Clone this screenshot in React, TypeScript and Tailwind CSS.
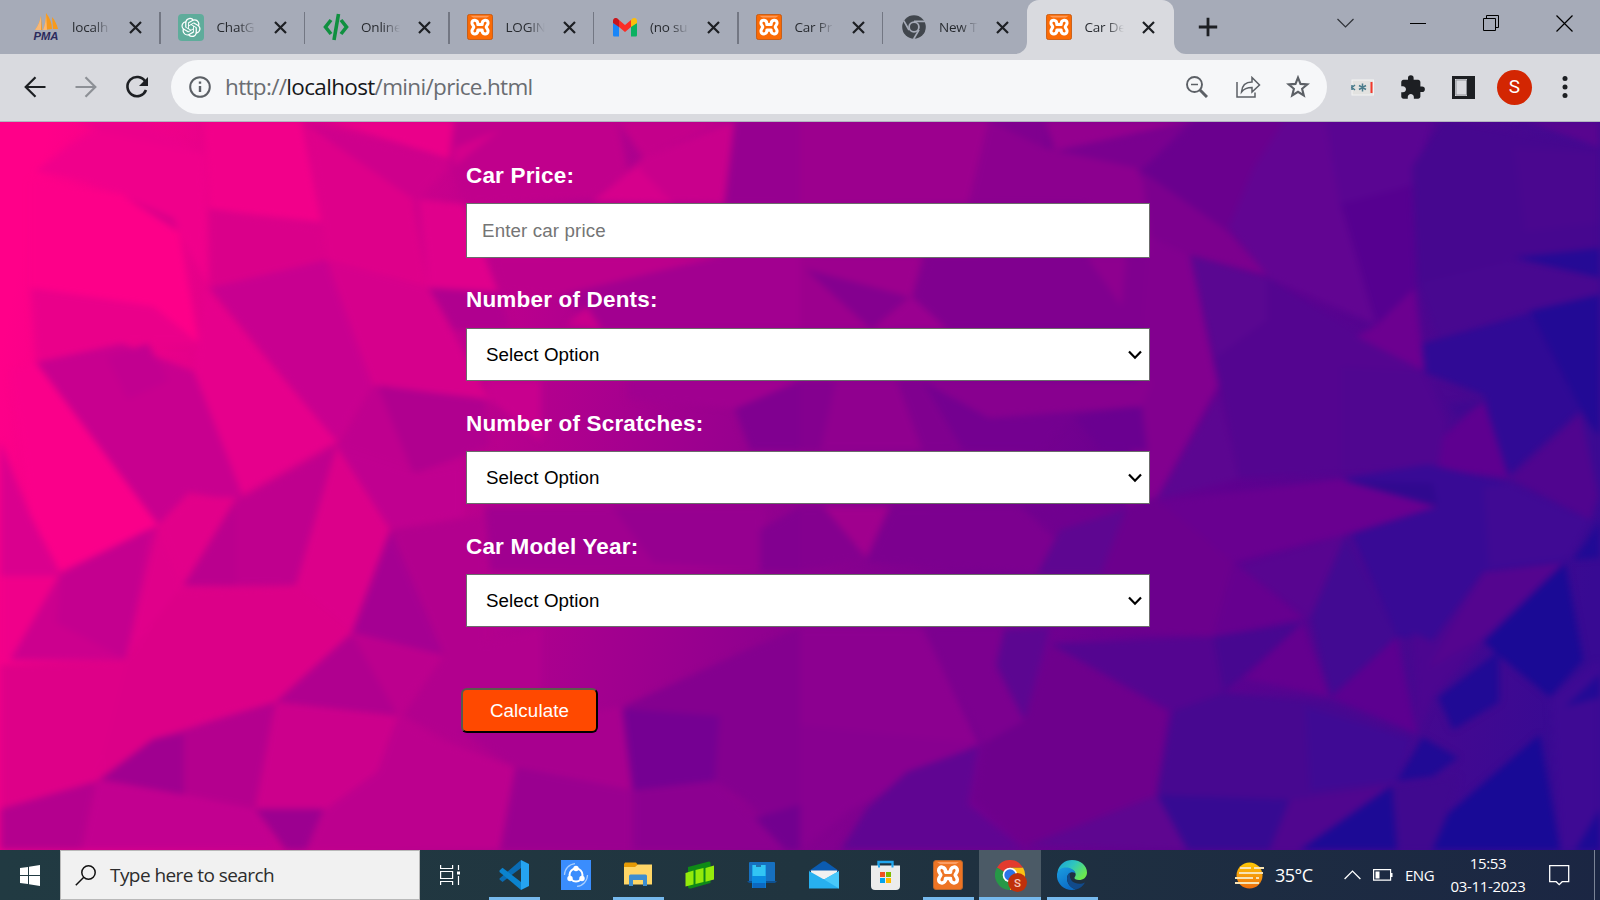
import type { ReactNode } from "react";

type Facet = [string, string];

const LEFT_FACETS: Facet[] = [
  ["70,110 140,50 200,10 400,70 410,360 350,240 240,160 160,130", "#f0008b"],
  ["60,130 240,160 350,240 390,480 300,400 60,360", "#fd0089"],
  ["245,165 350,240 340,210", "#d8008a"],
  ["150,0 280,0 400,75 200,25", "#ec008b"],
  ["400,0 590,0 630,220 410,190", "#f2008a"],
  ["590,0 890,90 810,180", "#ce008c"],
  ["600,10 810,170 840,360 640,300 630,220", "#de008a"],
  ["640,0 890,0 885,85", "#ea008a"],
  ["410,190 630,230 640,300 410,360", "#da008a"],
  ["410,360 640,300 730,570 660,690", "#c80090"],
  ["640,300 840,360 960,600 730,570", "#d6008c"],
  ["820,170 910,180 980,380 840,360", "#e0008c"],
  ["400,360 660,690 460,810 410,630 380,540", "#e6008c"],
  ["60,360 300,400 390,480 240,480 70,520", "#ea008a"],
  ["70,520 240,480 380,540 480,820 370,800 310,870", "#c8008f"],
  ["210,510 290,480 330,560 250,600", "#c20090"],
  ["20,540 70,520 310,870 120,970 60,850", "#fa008a"],
  ["0,690 60,850 120,980 0,980", "#da008e"],
  ["0,980 120,980 20,1160 0,1160", "#f0008a"],
  ["310,870 370,810 460,810 360,1000", "#e2008a"],
  ["460,820 660,700 580,1000 360,1000", "#bf008e"],
  ["460,820 460,1000 360,1000", "#ba008e"],
  ["660,700 765,880 690,1100 580,1000", "#dc008a"],
  ["730,570 960,600 910,740 820,760 660,700", "#bf008f"],
  ["740,570 950,600 960,700 810,760", "#b0008f"],
  ["660,700 820,760 910,740 910,850 765,880", "#c00090"],
  ["765,880 950,850 950,1150 870,1150", "#b2008e"],
  ["765,880 870,1150 690,1100", "#a50092"],
  ["120,970 310,870 245,1160 20,1160", "#cc008e"],
  ["290,880 250,1160 110,1080 120,980", "#c4008f"],
  ["310,870 360,1000 245,1160", "#e0008a"],
  ["245,1160 350,1010 580,1000 690,1100 540,1250 400,1290 190,1420", "#dc0088"],
  ["0,1170 250,1160 190,1420 0,1480", "#de0088"],
  ["690,1100 870,1150 780,1280 540,1250", "#bc008e"],
  ["690,1105 780,1280 540,1250", "#b0008f"],
  ["540,1250 780,1280 740,1400 640,1480 500,1480", "#cc008c"],
  ["190,1420 300,1330 540,1250 500,1480 360,1450", "#b4008e"],
  ["200,1415 300,1330 360,1320 360,1450", "#a00090"],
  ["0,1480 190,1420 160,1568 0,1568", "#b4008e"],
  ["190,1420 360,1450 500,1480 550,1568 160,1568", "#c20090"],
  ["500,1480 635,1480 600,1568 560,1568", "#9c0090"],
  ["780,1280 860,1330 1010,1390 980,1568 600,1568 640,1480 740,1400", "#bc008e"],
  ["870,1150 1060,1090 1060,1220 900,1340 790,1280", "#b2008e"],
  ["900,1310 1220,1260 1240,1440 1010,1390", "#a8008f"],
  ["1010,1390 1240,1440 1240,1568 980,1568", "#9a0090"],
  ["1220,1260 1460,1140 1568,1090 1568,1568 1460,1460 1400,1420", "#84008f"],
  ["1220,1265 1410,1280 1400,1420 1240,1440", "#750092"],
  ["1480,1500 1568,1470 1568,1568 1540,1568", "#72008f"],
  ["1240,1440 1400,1420 1540,1568 1240,1568", "#8c0090"],
  ["890,0 1210,0 1230,110 1160,170 910,180 880,90", "#c0008c"],
  ["890,60 980,20 890,100", "#d4008c"],
  ["1210,0 1430,0 1260,80", "#c4008b"],
  ["1160,175 1260,80 1440,0 1420,180", "#c9008c"],
  ["1250,100 1160,175 1320,180", "#d6008c"],
  ["1440,0 1568,0 1568,180 1420,180", "#960090"],
  ["960,290 1420,290 1100,380 980,370", "#bc008c"],
  ["1100,375 1420,290 1568,290 1568,450 1170,450", "#a20090"],
  ["840,360 980,370 1000,450 890,450", "#b0008f"],
  ["1110,440 1150,400 1180,450", "#c8008c"],
  ["950,560 1060,560 1060,690 960,600", "#c8008e"],
  ["1230,560 1568,560 1450,620 1230,600", "#a00090"],
  ["1440,620 1568,560 1568,710 1470,710", "#800090"],
  ["950,830 1490,830 1490,970 960,970", "#a00090"],
  ["1200,830 1500,830 1490,970 1280,950", "#960090"],
  ["1490,880 1568,830 1568,970 1490,970", "#820090"],
];

const RIGHT_FACETS: Facet[] = [
  ["0,0 370,0 330,180 0,180", "#9c008e"],
  ["330,180 370,0 480,60 660,100 720,250 685,300 560,180", "#8c008f"],
  ["370,0 480,0 480,60", "#80008f"],
  ["480,0 780,0 500,65", "#94008f"],
  ["500,65 760,10 670,105", "#7a008f"],
  ["670,110 780,0 950,0 840,240 720,190", "#6a008e"],
  ["670,110 840,240 920,335 765,290 685,250", "#7c008e"],
  ["950,0 1030,0 1060,180 1130,440 920,340 840,230 890,100", "#620592"],
  ["1030,0 1240,0 1200,140 1060,190", "#5a0592"],
  ["1060,180 1200,140 1210,360 1130,440", "#560090"],
  ["1200,100 1260,0 1568,60 1568,280 1400,300 1210,360", "#46078f"],
  ["1420,0 1568,0 1568,60", "#58058f"],
  ["1400,60 1568,70 1568,220 1420,240", "#4a078f"],
  ["1210,350 1400,300 1568,340 1568,375 1430,410 1250,470", "#480890"],
  ["1400,295 1568,275 1568,338", "#250a95"],
  ["1220,480 1430,415 1530,620 1380,770 1340,590 1220,540", "#300a95"],
  ["1430,410 1568,375 1568,690 1530,620", "#220a95"],
  ["0,290 240,290 220,380 150,450 0,450", "#9c008e"],
  ["10,320 215,380 140,450", "#84008f"],
  ["220,380 290,450 150,450", "#9a0090"],
  ["250,290 690,290 690,450 290,450 220,380", "#80008f"],
  ["560,290 640,290 630,400", "#8e008f"],
  ["685,250 765,290 820,570 700,810 640,830", "#82008f"],
  ["765,290 920,340 1100,460 1220,540 1270,650 1250,745 860,770 820,560", "#540590"],
  ["765,290 915,340 915,430 815,510", "#5a0791"],
  ["1060,530 1220,540 1270,650 1250,745 1060,760", "#500690"],
  ["1130,440 1205,360 1225,540 1090,465", "#6c0090"],
  ["820,590 860,770 700,815", "#5c0691"],
  ["1260,680 1340,600 1390,770 1250,750", "#5e0090"],
  ["1270,610 1350,600 1290,640", "#400890"],
  ["1390,770 1530,630 1568,800 1550,860", "#50058f"],
  ["1530,630 1568,680 1568,820", "#3c0a92"],
  ["0,560 190,560 240,710 0,710", "#90008f"],
  ["0,560 70,560 40,710 0,710", "#84008f"],
  ["190,560 240,560 320,710 240,710", "#80008f"],
  ["240,560 370,640 540,630 470,710 320,710", "#740090"],
  ["240,560 690,560 670,615 370,640", "#88008f"],
  ["540,640 670,615 680,710 590,710", "#6a0090"],
  ["700,820 1060,770 1250,830 1070,890 850,950", "#690090"],
  ["1060,770 1230,740 1390,780 1550,860 1500,950 1340,970 1240,1120 1170,1110 1080,890 1250,830", "#380a95"],
  ["1340,790 1390,780 1550,860 1510,940 1350,960", "#400a94"],
  ["1070,775 1240,780 1250,830", "#30098f"],
  ["860,960 1070,890 1000,1070", "#580590"],
  ["1070,890 1170,1110 1040,1240 1000,1070", "#420a92"],
  ["640,835 700,815 850,950 810,1110 590,1100 590,975", "#6c008d"],
  ["850,950 990,1070 810,1110", "#66008f"],
  ["0,830 50,830 130,940 0,970", "#84008f"],
  ["45,830 175,830 130,940", "#a0008e"],
  ["180,830 430,830 500,900 465,975 130,950", "#7c008f"],
  ["430,830 640,835 510,880", "#70008f"],
  ["510,880 640,835 590,975 465,975", "#5e0691"],
  ["0,1090 240,1090 350,1340 100,1470 0,1568", "#8c0090"],
  ["0,1300 350,1340 100,1480 0,1568", "#880090"],
  ["240,1090 400,1090 385,1180 440,1290 360,1340", "#7c008f"],
  ["400,1095 490,1090 440,1290 385,1170", "#5c0691"],
  ["490,1130 720,1270 700,1450 440,1560 340,1460 360,1340 440,1290", "#6e008c"],
  ["350,1345 330,1470 440,1568 80,1568 130,1480 210,1400", "#600592"],
  ["440,1560 700,1450 760,1568", "#5e0690"],
  ["490,1125 810,1110 830,1230 730,1270", "#540590"],
  ["810,1110 985,1080 830,1230", "#470790"],
  ["985,1080 1040,1240 870,1200", "#64008f"],
  ["730,1270 830,1230 1040,1250 1200,1330 1170,1420 1000,1568 760,1568 700,1440", "#470890"],
  ["990,1260 1200,1330 1170,1420 1000,1440", "#3f0a94"],
  ["700,1450 960,1460 920,1568 760,1568", "#360a92"],
  ["960,1460 1160,1430 980,1568 920,1568", "#50068f"],
  ["1040,1240 1170,1110 1210,1320", "#5c0090"],
  ["1200,1100 1240,1120 1340,970 1500,950 1340,1120 1240,1240 1210,1320", "#4c0690"],
  ["1340,970 1500,950 1340,1110 1230,1180", "#54058f"],
  ["1250,1240 1370,1140 1370,1250 1280,1310", "#200a95"],
  ["1340,1120 1500,950 1535,1160 1470,1240 1370,1150", "#1a0a95"],
  ["1170,1420 1220,1325 1290,1370 1240,1410", "#200a95"],
  ["1160,1430 1290,1410 1270,1490 1300,1568 1170,1568", "#40098f"],
  ["980,1568 1160,1430 1170,1568", "#1c0a95"],
  ["1270,1490 1450,1320 1490,1568 1240,1568", "#180a96"],
  ["1470,1240 1568,1160 1568,1568 1490,1568", "#3e0a94"],
  ["1500,1260 1568,1190 1568,1240", "#220a95"],
  ["1520,1568 1568,1480 1568,1568", "#1c0a95"],
  ["1545,900 1568,860 1568,940 1515,945", "#200a95"],
];

function Backdrop() {
  return (
    <svg className="absolute inset-0 h-full w-full" viewBox="0 4 3136 1564" preserveAspectRatio="none" aria-hidden="true">
      <defs>
        <linearGradient id="sweep" gradientUnits="userSpaceOnUse" x1="0" y1="500" x2="3100" y2="1100">
          <stop offset="0" stopColor="#ff0089" />
          <stop offset="0.13" stopColor="#e2008a" />
          <stop offset="0.27" stopColor="#c2008d" />
          <stop offset="0.4" stopColor="#a4008f" />
          <stop offset="0.55" stopColor="#86008f" />
          <stop offset="0.75" stopColor="#620090" />
          <stop offset="0.9" stopColor="#470890" />
          <stop offset="1" stopColor="#380a93" />
        </linearGradient>
        <filter id="soften" x="-2%" y="-2%" width="104%" height="104%" colorInterpolationFilters="sRGB">
          <feGaussianBlur stdDeviation="7" />
        </filter>
      </defs>
      <rect y="0" width="3136" height="1568" fill="url(#sweep)" />
      <g filter="url(#soften)">
        {LEFT_FACETS.map(([points, fill], i) => (
          <polygon key={i} points={points} fill={fill} />
        ))}
        <g transform="translate(1568 0)">
          {RIGHT_FACETS.map(([points, fill], i) => (
            <polygon key={i} points={points} fill={fill} />
          ))}
        </g>
      </g>
    </svg>
  );
}

function Xampp({ size, muted = false }: { size: number; muted?: boolean }) {
  return (
    <svg width={size} height={size} viewBox="0 0 30 30">
      <rect x="0.5" y="0.5" width="29" height="29" rx="2.5" fill={muted ? "#ee7424" : "#fb6a04"} stroke={muted ? "#b8662c" : "#c4560c"} />
      <path d="M4 2h22l-3 2H7z" fill="#ffa870" opacity="0.8" />
      <path
        d="M12.500 12.200h5C17 6 24.500 5.500 24.300 10.500c-.2 2.200-1.600 2.800-2.100 4.500.5 1.700 1.900 2.300 2.100 4.500C24.500 24.500 17 24 17.500 18.600h-5C13 24 5.500 24.500 5.700 19.500c.2-2.200 1.600-2.800 2.100-4.500-.5-1.700-1.900-2.300-2.100-4.500C5.500 5.500 13 6 12.500 12.200z"
        fill="none" stroke="#fff" strokeWidth="3.500" strokeLinejoin="round"
      />
    </svg>
  );
}

const Pma = () => (
  <svg width="27" height="28" viewBox="0 0 27 28">
    <path d="M2 17C5 13 7 8 8 3l1 14zM10 17c2-5 3-10 3-17 4 5 6 10 6 16zM20 16l-1-12c3 3 5 8 6 12z" fill="#f79a1c" />
    <path d="M2 17C5 13 7 8 8 3v14zM10 17c2-5 3-10 3-17l1 17z" fill="#f9b876" />
    <text x="0.500" y="26.500" fontFamily="Liberation Sans, sans-serif" fontSize="10" fontWeight="700" fontStyle="italic" fill="#2b2a5c" textLength="25" lengthAdjust="spacingAndGlyphs">PMA</text>
  </svg>
);

const ChatGpt = () => (
  <svg width="26" height="27" viewBox="0 0 26 27">
    <rect width="26" height="27" rx="4" fill="#5fac9b" />
    <g transform="translate(3.400 3.800) scale(0.800)" fill="#fff">
      <path d="M22.282 9.821a5.985 5.985 0 0 0-.516-4.910 6.046 6.046 0 0 0-6.510-2.900A6.065 6.065 0 0 0 4.981 4.182a5.985 5.985 0 0 0-3.998 2.900 6.046 6.046 0 0 0 .743 7.097 5.980 5.980 0 0 0 .510 4.911 6.051 6.051 0 0 0 6.515 2.900A5.985 5.985 0 0 0 13.260 24a6.056 6.056 0 0 0 5.772-4.206 5.990 5.990 0 0 0 3.998-2.900 6.056 6.056 0 0 0-.747-7.073zM13.260 22.430a4.476 4.476 0 0 1-2.876-1.040l.141-.081 4.779-2.758a.795.795 0 0 0 .393-.681v-6.737l2.020 1.168a.071.071 0 0 1 .038.052v5.583a4.504 4.504 0 0 1-4.495 4.494zM3.600 18.304a4.470 4.470 0 0 1-.535-3.014l.142.085 4.783 2.759a.771.771 0 0 0 .780 0l5.843-3.369v2.332a.080.080 0 0 1-.033.062L9.740 19.950a4.500 4.500 0 0 1-6.140-1.646zM2.341 7.896a4.485 4.485 0 0 1 2.366-1.973V11.600a.766.766 0 0 0 .388.676l5.815 3.355-2.020 1.168a.076.076 0 0 1-.071 0l-4.830-2.786A4.504 4.504 0 0 1 2.341 7.872zm16.597 3.855l-5.833-3.387L15.119 7.200a.076.076 0 0 1 .071 0l4.830 2.791a4.494 4.494 0 0 1-.676 8.104v-5.677a.790.790 0 0 0-.407-.667zm2.010-3.023l-.141-.085-4.774-2.782a.776.776 0 0 0-.785 0L9.409 9.230V6.897a.066.066 0 0 1 .028-.061l4.830-2.787a4.500 4.500 0 0 1 6.680 4.660zm-12.640 4.135l-2.020-1.164a.080.080 0 0 1-.038-.057V6.074a4.500 4.500 0 0 1 7.375-3.453l-.142.080L8.704 5.460a.795.795 0 0 0-.393.681zm1.097-2.365l2.602-1.500 2.607 1.500v2.999l-2.597 1.500-2.607-1.500z" />
    </g>
  </svg>
);

const CodeTag = () => (
  <svg width="26" height="28" viewBox="0 0 26 28" fill="none" stroke="#109040" strokeWidth="3.600">
    <path d="M8 7 2.500 14 8 21M18 7l5.500 7-5.500 7M15.500 1l-4.500 26" />
  </svg>
);

const Gmail = () => (
  <svg width="24" height="19" viewBox="0 0 24 19">
    <path d="M0 5v12c0 1 .6 1.500 1.500 1.500H6V8z" fill="#1a86f8" />
    <path d="M24 5v12c0 1-.6 1.500-1.500 1.500H18V8z" fill="#0bb161" />
    <path d="M6 9V2l6 5 6-5v7l-6 5z" fill="#fb2c25" />
    <path d="M0 5V3c0-3 3-4 5-2l1 1v7z" fill="#c9161c" />
    <path d="M24 5V3c0-3-3-4-5-2l-1 1v7z" fill="#fdbd0b" />
  </svg>
);

const ChromeGray = () => (
  <svg width="24" height="24" viewBox="0 0 24 24">
    <circle cx="12" cy="12" r="11.800" fill="#41464d" />
    <circle cx="12" cy="12" r="4.900" fill="none" stroke="#a6abb8" strokeWidth="1.800" />
    <path d="M12 6.300h11M7 15 1.700 5.700M17 14.800l-5.300 9.200" stroke="#a6abb8" strokeWidth="1.700" />
  </svg>
);

const CloseMark = () => (
  <svg width="13" height="13" viewBox="0 0 13 13" className="shrink-0" stroke="#1d1f23" strokeWidth="2.200">
    <path d="M1 1l11 11M12 1 1 12" />
  </svg>
);

function Tab({ icon, title, active = false, sep = true }: { icon: ReactNode; title: string; active?: boolean; sep?: boolean }) {
  return (
    <div className={active ? "relative -ml-px flex h-[54px] w-[147px] shrink-0 items-center rounded-t-[12px] bg-[#d9dadf] pl-[19px]" : "relative flex h-[54px] w-[144.5px] shrink-0 items-center pl-[17px]"}>
      {active && (
        <>
          <svg className="absolute bottom-0 -left-[12px]" width="12" height="12"><path d="M12 0v12H0A12 12 0 0 0 12 0" fill="#d9dadf" /></svg>
          <svg className="absolute -right-[12px] bottom-0" width="12" height="12"><path d="M0 0v12h12A12 12 0 0 1 0 0" fill="#d9dadf" /></svg>
        </>
      )}
      <div className="flex w-[27px] shrink-0 justify-center">{icon}</div>
      <div className="ml-[12px] w-[39px] bg-linear-to-r from-[#25282d] from-55% to-transparent bg-clip-text text-[13.5px] tracking-[-0.2px] whitespace-nowrap text-transparent">{title}</div>
      <div className="ml-[18px] flex">
        <CloseMark />
      </div>
      {sep && <div className="absolute top-[12px] right-0 h-[32px] w-[1.5px] bg-[#737783]" />}
    </div>
  );
}

function TabStrip() {
  return (
    <div className="flex h-[54px] w-full bg-[#a6abb8] pl-[16px]">
      <Tab icon={<Pma />} title="localh" />
      <Tab icon={<ChatGpt />} title="ChatG" />
      <Tab icon={<CodeTag />} title="Online" />
      <Tab icon={<Xampp size={26} />} title="LOGIN" />
      <Tab icon={<Gmail />} title="(no su" />
      <Tab icon={<Xampp size={26} />} title="Car Pr" />
      <Tab icon={<ChromeGray />} title="New T" sep={false} />
      <Tab icon={<Xampp size={26} />} title="Car De" active sep={false} />
      <svg className="mt-[17px] ml-[24px]" width="20" height="20" viewBox="0 0 20 20" stroke="#1d1f23" strokeWidth="2.800"><path d="M10 .8v18.400M.8 10h18.400" /></svg>
      <div className="ml-auto flex h-[46px] items-center gap-[56px] pr-[27px]">
        <svg width="17" height="16" viewBox="0 0 17 16" fill="none" stroke="#2f3238" strokeWidth="1.200"><path d="m.5 4 8 8 8-8" /></svg>
        <svg width="17" height="16" viewBox="0 0 17 16"><path d="M0 8.500h16" stroke="#000" /></svg>
        <svg width="17" height="17" viewBox="0 0 17 17" fill="none" stroke="#000"><path d="M.5 3.500h12v12H.5zM3.500 3.500v-3h12v12h-3" /></svg>
        <svg width="17" height="17" viewBox="0 0 17 17" stroke="#000" strokeWidth="1.200"><path d="m.5.5 16 16M16.500.5l-16 16" /></svg>
      </div>
    </div>
  );
}

function Toolbar() {
  return (
    <div className="flex h-[68px] items-center border-b-[1.500px] border-[#b2b5bf] bg-[#d9dadf] pb-px">
      <svg className="ml-[24px]" width="22" height="22" viewBox="0 0 22 22" fill="none" stroke="#1d1f23" strokeWidth="2.200"><path d="M21.500 11H2M11.500 1.200 1.700 11l9.800 9.800" /></svg>
      <svg className="ml-[29px]" width="22" height="22" viewBox="0 0 22 22" fill="none" stroke="#8d9096" strokeWidth="2.200"><path d="M.5 11H20M10.500 1.200 20.300 11l-9.800 9.800" /></svg>
      <svg className="ml-[28px]" width="24" height="24" viewBox="0 0 24 24" fill="none" stroke="#1d1f23" strokeWidth="2.600"><path d="M20.200 6.500A9.600 9.600 0 1 0 21 15" /><path d="M23 2v9h-9z" fill="#1d1f23" stroke="none" /></svg>
      <div className="ml-[22px] flex h-[54px] w-[1156px] items-center rounded-full bg-[#f6f7f9] pl-[18px]">
        <svg width="22" height="22" viewBox="0 0 22 22" fill="none" stroke="#5c6066" strokeWidth="2"><circle cx="11" cy="11" r="9.800" /><path d="M11 10v6M11 5.500v2.300" strokeWidth="2.400" /></svg>
        <div className="ml-[14px] text-[22.500px] tracking-[-0.670px] whitespace-nowrap text-[#6a6d72]">
          http://<span className="text-[#17181b]">localhost</span>/mini/price.html
        </div>
        <div className="ml-auto flex items-center pr-[17px] text-[#5c6066]">
          <svg width="22" height="22" viewBox="0 0 22 22" fill="none" stroke="currentColor" strokeWidth="1.900"><circle cx="8.500" cy="8.500" r="7.500" /><path d="M5 8.500h7" strokeWidth="1.500" /><path d="m14 14 7 7" strokeWidth="3" /></svg>
          <svg className="ml-[28px]" width="25" height="22" viewBox="0 0 25 22" fill="none" stroke="currentColor" strokeWidth="1.500"><path d="M1 6v15h18v-4.500" /><path d="M5.500 16C6 9.500 10 6 16 6V1.500L23.500 9 16 16v-4.500c-4.500 0-8 1.200-10.500 4.500z" /></svg>
          <svg className="ml-[25px]" width="24" height="24" viewBox="0 0 24 24" fill="none" stroke="currentColor" strokeWidth="2.100"><path d="m12 2.600 2.500 6.300 6.900.500-5.300 4.400 1.700 6.700-5.800-3.700-5.800 3.700 1.700-6.700-5.300-4.400 6.900-.500z" /></svg>
        </div>
      </div>
      <svg className="ml-[24px]" width="23" height="17" viewBox="0 0 23 17"><rect x="1" y="1" width="21.500" height="15" fill="#e2e2e0" stroke="#f3f3f3" /><path d="M11.500 4.500v8M8 6.500l7 4M15 6.500l-7 4M0 8.500h1M1 6v5M1 8.500l3-2.500M1 8.500l3 2.500" stroke="#4a7c8c" strokeWidth="1.500" /><path d="M20.500 3v11" stroke="#f3372b" strokeWidth="2" /></svg>
      <svg className="ml-[25px]" width="27" height="27" viewBox="0 0 24 24" fill="#1d1f23"><path d="M20.500 11H19V7c0-1.100-.9-2-2-2h-4V3.500a2.500 2.500 0 0 0-5 0V5H4c-1.100 0-1.990.9-1.990 2v3.800H3.500c1.490 0 2.700 1.210 2.700 2.700s-1.210 2.700-2.700 2.700H2V20c0 1.100.9 2 2 2h3.800v-1.500c0-1.490 1.210-2.700 2.700-2.700s2.700 1.210 2.700 2.700V22H17c1.100 0 2-.9 2-2v-4h1.500a2.500 2.500 0 0 0 0-5z" /></svg>
      <svg className="ml-[26px]" width="23" height="23" viewBox="0 0 23 23"><path d="M1.500 1.500h20v20h-20z" fill="none" stroke="#1d1f23" strokeWidth="3" /><path d="M15 1h7v21h-7z" fill="#1d1f23" /><path d="M4 4h10.500v15H4z" fill="none" stroke="#909298" /></svg>
      <div className="ml-[22px] flex h-[35px] w-[35px] items-center justify-center rounded-full bg-[#d32602] font-[Roboto] text-[19px] text-white">S</div>
      <svg className="ml-[30px]" width="6" height="22" viewBox="0 0 6 22" fill="#1d1f23"><circle cx="3" cy="2.600" r="2.500" /><circle cx="3" cy="11" r="2.500" /><circle cx="3" cy="19.400" r="2.500" /></svg>
    </div>
  );
}

function SelectBox() {
  return (
    <div className="flex h-[53px] items-center justify-between border border-[#6b6b6b] bg-white pr-[7px] pl-[19px] text-[18.750px] text-black">
      <span className="pt-[2px] tracking-[0.080px]">Select Option</span>
      <svg width="14" height="10" viewBox="0 0 14 10" fill="none" stroke="#000" strokeWidth="2.200"><path d="m1 1.500 6 6.200 6-6.200" /></svg>
    </div>
  );
}

const Label = ({ children }: { children: ReactNode }) => <div className="flex h-[30px] items-center pt-[2px] text-[22.500px] font-bold tracking-[0.180px] whitespace-nowrap text-white">{children}</div>;

function FormPage() {
  return (
    <main className="relative h-[728px] overflow-hidden">
      <Backdrop />
      <div className="relative ml-[466px] w-[684px] pt-[38px] font-['Liberation_Sans',Arial,sans-serif]">
        <Label>Car Price:</Label>
        <div className="mt-[13px] flex h-[55px] items-center border border-[#6b6b6b] bg-white pt-[2px] pl-[15px] text-[18.750px] tracking-[0.120px] text-[#757575]">Enter car price</div>
        <div className="mt-[26px] mb-[14px]"><Label>Number of Dents:</Label></div>
        <SelectBox />
        <div className="mt-[27px] mb-[13px]"><Label>Number of Scratches:</Label></div>
        <SelectBox />
        <div className="mt-[27px] mb-[13px]"><Label>Car Model Year:</Label></div>
        <SelectBox />
        <button className="mt-[61px] -ml-[5px] block h-[45px] w-[137px] rounded-[6px] border-2 border-t-[#5a5a4c] border-r-black border-b-black border-l-[#5a5a4c] bg-[#ff4900] pt-[2px] text-[18.750px] tracking-[0.120px] text-white">Calculate</button>
      </div>
    </main>
  );
}

const VsCode = () => (
  <svg width="30" height="30" viewBox="0 0 30 30">
    <path d="M22 0v8L3.500 22 .5 19.500v-1z" fill="#0a6cb4" />
    <path d="m.5 10.500 3-2.700L22 22v8L.5 12z" fill="#0b83cf" />
    <path d="M22 0 30 4v22l-8 4z" fill="#25a3f0" />
  </svg>
);
const ShareIt = () => (
  <svg width="30" height="30" viewBox="0 0 30 30">
    <rect width="30" height="30" fill="#3a8dfd" />
    <g fill="none" stroke="#fff"><circle cx="15" cy="15" r="6.500" strokeWidth="2" /><path d="M3.500 15A11.500 11.500 0 0 1 14 3.600M26.500 15A11.500 11.500 0 0 1 16 26.400" stroke="#a9cffe" strokeWidth="1.200" /></g>
    <g fill="#fff"><circle cx="15" cy="8.500" r="2.700" /><circle cx="9" cy="18.500" r="2.700" /><circle cx="21" cy="18.500" r="2.700" /></g>
  </svg>
);
const Folder = () => (
  <svg width="28" height="26" viewBox="0 0 28 26">
    <path d="M0 2 1 .5h11L14 3h12.500v8H0z" fill="#e59a05" /><path d="M0 5h11l3-2.500h14V22.500H0z" fill="#ffd667" />
    <path d="M5 24V14q0-1.500 1.500-1.500h15Q23 12.500 23 14v10h-4v-6H9v6z" fill="#3e8ed0" />
  </svg>
);
const GreenTiles = () => (
  <svg width="30" height="28" viewBox="0 0 30 28">
    <path d="M3 6 24 .5q1.500 0 1.500 1.500v20L6 27.500Q3 28 3 26z" fill="#0f8a17" />
    <path d="m.5 12 8-2.500v14l-8 2zM10.500 9 18.500 7v14l-8 2zM20.500 7l8.500-2.500v14l-8.500 2.300z" fill="#94ea0b" />
  </svg>
);
const PhoneLink = () => (
  <svg width="30" height="28" viewBox="0 0 30 28">
    <path d="M2 2q0-1 1-1h24q1 0 1 1v18H2z" fill="#1670c0" /><path d="M0 20h30l-2 2H2z" fill="#0e5190" />
    <path d="M5 4h14v23H5z" fill="#0a8be0" /><path d="M5.500 4h13v11h-13z" fill="#32c5f4" /><path d="M5.500 22h13v5h-13z" fill="#0c68c0" /><path d="M9 5h5" stroke="#126" />
  </svg>
);
const Mail = () => (
  <svg width="30" height="28" viewBox="0 0 30 28">
    <path d="M0 10 13.500.6q1.500-.8 3 0L30 10z" fill="#0b5bb0" /><path d="M2 9.500h26v9H2z" fill="#f1f1f1" />
    <path d="M0 10 15 18.500 30 10v17.500H0z" fill="#27b0f0" /><path d="M15 18.500 30 10v17.500z" fill="#48c8fa" />
  </svg>
);
const Store = () => (
  <svg width="29" height="30" viewBox="0 0 29 30" className="-translate-x-px">
    <path d="M7.500 7V2h14v5" fill="none" stroke="#22a6ee" strokeWidth="2.400" /><path d="M0 5.500h29V26q0 4-4 4H4q-4 0-4-4z" fill="#ececec" />
    <path d="M8 5v2.500M21.500 5v2.500" stroke="#22a6ee" strokeWidth="2" />
    <path d="M9 12h5v5H9z" fill="#f25022" /><path d="M15 12h5v5h-5z" fill="#7fba00" /><path d="M9 18h5v5H9z" fill="#00a4ef" /><path d="M15 18h5v5h-5z" fill="#ffb900" />
  </svg>
);
const ChromeProfile = () => (
  <svg width="32" height="32" viewBox="0 0 32 32" className="translate-x-[1px] translate-y-[1px]">
    <path d="M15 15V7.500h13A15 15 0 0 1 15 30z" fill="#fbc116" /><path d="M15 15 15 30A15 15 0 0 1 2 7.500z" fill="#279847" />
    <path d="M15 15 8 11 2 7.500A15 15 0 0 1 28 7.500H15z" fill="#e33b2e" />
    <circle cx="15" cy="15" r="7.300" fill="#fff" /><circle cx="15" cy="15" r="5.700" fill="#2a74e8" />
    <circle cx="22.500" cy="22.500" r="9.500" fill="#c0310b" />
    <text x="22.500" y="26.500" textAnchor="middle" fontFamily="Roboto, sans-serif" fontSize="11.500" fontWeight="500" fill="#f6c9bd">S</text>
  </svg>
);
const Edge = () => (
  <svg width="30" height="30" viewBox="0 0 30 30">
    <defs>
      <linearGradient id="edgeTop" x1="0" y1="0" x2="1" y2=".6"><stop offset="0" stopColor="#19a0dc" /><stop offset=".5" stopColor="#30c6bd" /><stop offset="1" stopColor="#6be84e" /></linearGradient>
      <linearGradient id="edgeSide" x1="0" y1="0" x2=".5" y2="1"><stop offset="0" stopColor="#1b9ee0" /><stop offset="1" stopColor="#0c6dc8" /></linearGradient>
    </defs>
    <path d="M.5 12C2 4.500 8 0 15 0c9 0 15 6 15 12.500 0 5-4 7.500-8 7.500-3 0-5-1-4.500-2.500 1-1.500 1.500-2.500 1-4C17.500 8.500 7 6 .5 12" fill="url(#edgeTop)" />
    <path d="M0 14C1 9 5 7.500 9 7.500c5 0 8.500 2.500 9.500 5.500-5-2-8.500 1-8.500 5.500C10 24 14 28 19 29.500 8 32-1 24 0 14" fill="url(#edgeSide)" />
    <path d="M13 12.500c-5 3-4 14 6 17 4-1 7-3.500 9-7-6 3-17 1-15-10" fill="#114a8b" />
  </svg>
);

function Task({ children, state = "idle" }: { children: ReactNode; state?: "idle" | "open" | "active" }) {
  return (
    <div className={state === "active" ? "flex h-[50px] w-[62px] flex-col items-center bg-[#4b5a66]" : "flex h-[50px] w-[62px] flex-col items-center"}>
      <div className="flex h-[47px] items-center justify-center pt-[3px]">{children}</div>
      {state !== "idle" && <div className={state === "active" ? "h-[3px] w-full bg-[#76b9ed]" : "h-[3px] w-[51px] bg-[#76b9ed]"} />}
    </div>
  );
}

function Taskbar() {
  return (
    <footer className="flex h-[50px] items-center bg-linear-to-r from-[#213a42] via-[#20343f] to-[#1b2643] text-white">
      <svg className="ml-[20px]" width="20" height="21" viewBox="0 0 20 21" fill="#fff"><path d="M0 3l8-1.100v8.100H0zM9 1.700 20 0v10H9zM0 11h8v8.100L0 18zM9 11h11v10L9 19.300z" /></svg>
      <div className="ml-[20px] flex h-[50px] w-[360px] items-center border border-[#b9b9b9] bg-[#f1f1f1] pl-[14px]">
        <svg width="21" height="21" viewBox="0 0 21 21" fill="none" stroke="#111" strokeWidth="1.500"><circle cx="13.500" cy="7.500" r="6.700" /><path d="m8.800 12.200-8 8" /></svg>
        <div className="ml-[14px] text-[19px] tracking-[-0.560px] whitespace-nowrap text-[#2c2c2c]">Type here to search</div>
      </div>
      <svg className="ml-[20px]" width="21" height="20" viewBox="0 0 21 20" fill="none" stroke="#fff" strokeWidth="1.200"><path d="M.6 0v3.500h12V0M.6 6.500h12v7H.6zM.6 20v-3.500h12V20M18.500 0v5M18.500 11v9" /><path d="M17 6.500h3v3h-3z" fill="#fff" stroke="none" /></svg>
      <div className="ml-[22px] flex">
        <Task state="open"><VsCode /></Task>
        <Task><ShareIt /></Task>
        <Task state="open"><Folder /></Task>
        <Task><GreenTiles /></Task>
        <Task><PhoneLink /></Task>
        <Task><Mail /></Task>
        <Task><Store /></Task>
        <Task state="open"><Xampp size={30} muted /></Task>
        <Task state="active"><ChromeProfile /></Task>
        <Task state="open"><Edge /></Task>
      </div>
      <svg className="ml-[131px] shrink-0" width="31" height="27" viewBox="0 0 31 27">
        <defs><linearGradient id="sun" x1="0" y1="0" x2="0" y2="1"><stop offset="0" stopColor="#fdc907" /><stop offset="1" stopColor="#ee6d0d" /></linearGradient></defs>
        <circle cx="15.500" cy="13.500" r="13" fill="url(#sun)" />
        <path d="M6 6h11M20 6h10M5 11h24M1 16h18M22 16h3M1 21h24" stroke="#f7e3b4" strokeWidth="2.100" />
      </svg>
      <div className="ml-[10px] w-[69px] text-[18px] tracking-[-0.500px]">35°C</div>
      <svg width="17" height="10" viewBox="0 0 17 10" fill="none" stroke="#fff" strokeWidth="1.300"><path d="m.6 9 7.900-7.900L16.400 9" /></svg>
      <svg className="ml-[12px]" width="20" height="12" viewBox="0 0 20 12" fill="none" stroke="#fff" strokeWidth="1.200"><path d="M.6.600h17v10.500H.6z" /><path d="M2.500 2.500h4v7h-4zM18 4h1.500v4H18z" fill="#fff" stroke="none" /></svg>
      <div className="ml-[12px] w-[32px] text-[15px] tracking-[-0.500px]">ENG</div>
      <div className="ml-[10px] flex w-[82px] flex-col items-center text-[15px] leading-[23px] tracking-[-0.350px] whitespace-nowrap">
        <span>15:53</span>
        <span>03-11-2023</span>
      </div>
      <svg className="ml-[20px]" width="21" height="21" viewBox="0 0 21 21" fill="none" stroke="#fff" strokeWidth="1.300"><path d="M.7.700h19v16h-6.500l-3 3-3-3H.7z" /></svg>
      <div className="ml-auto mr-[5px] h-[50px] w-px bg-[#7b8496]" />
    </footer>
  );
}

export default function App() {
  return (
    <div className="flex h-[900px] w-[1600px] flex-col overflow-hidden font-['Open_Sans','Noto_Sans',sans-serif]">
      <TabStrip />
      <Toolbar />
      <FormPage />
      <Taskbar />
    </div>
  );
}
